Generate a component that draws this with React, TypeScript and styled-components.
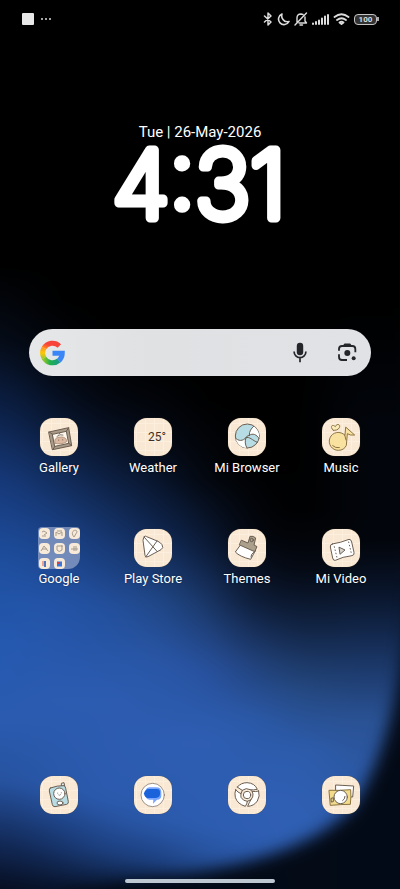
import React from "react";
import styled, { createGlobalStyle } from "styled-components";

const GlobalStyle = createGlobalStyle`
  * { box-sizing: border-box; }
  body { margin: 0; background: #000; font-family: Roboto, "Noto Sans", sans-serif; color: #fff; }
  button { border: 0; padding: 0; background: none; color: inherit; font: inherit; cursor: pointer; }
`;

const Screen = styled.main`
  position: relative;
  isolation: isolate;
  display: flex;
  flex-direction: column;
  min-height: 100vh;
  overflow: hidden;
`;

const WallpaperArt = styled.svg`
  position: absolute;
  inset: 0;
  z-index: -1;
  width: 100%;
  height: 100%;
`;

const StatusBar = styled.header`
  display: flex;
  align-items: center;
  justify-content: space-between;
  height: 38px;
  padding: 0 21px 0 22px;
  color: #dcdcdc;
`;

const StatusGroup = styled.div<{ $gap: number }>`
  display: flex;
  align-items: center;
  gap: ${(p) => p.$gap}px;
`;

const Notice = styled.span`
  width: 12px;
  height: 12px;
  border-radius: 1px;
  background: #e8e8e8;
`;

const StatusIcon = styled.svg`
  display: block;
  height: 14px;
  fill: none;
  stroke: currentColor;
  stroke-linecap: round;
  stroke-linejoin: round;
`;

const Battery = styled.span`
  display: flex;
  align-items: center;
  &::after {
    content: "";
    width: 2px;
    height: 4px;
    background: #aaa;
  }
`;

const BatteryBody = styled.span`
  width: 23px;
  height: 11px;
  border: 1px solid #c4c4c4;
  border-radius: 4px;
  background: #333;
  font-size: 8px;
  font-weight: 700;
  line-height: 10px;
  text-align: center;
`;

const ClockWidget = styled.section`
  display: flex;
  flex-direction: column;
  align-items: center;
  padding-top: 84px;
  height: 291px;
`;

const DateLine = styled.div`
  font-size: 15px;
  line-height: 20px;
`;

const ClockFace = styled.svg`
  width: 200px;
  height: 88px;
  overflow: visible;
  text {
    font-family: Inter, Roboto, sans-serif;
    font-size: 93px;
    font-weight: 200;
    fill: #fff;
    stroke: #fff;
    stroke-width: 9px;
    stroke-linejoin: round;
    text-anchor: middle;
  }
`;

const SearchBar = styled.form`
  display: flex;
  align-items: center;
  height: 47px;
  margin: 0 29px;
  padding: 0 12px 0 11px;
  border-radius: 24px;
  background: linear-gradient(90deg, #e6e7e8, #dfe1e3 35%, #e1e2e5);
`;

const SearchInput = styled.input`
  flex: 1;
  min-width: 0;
  height: 100%;
  padding: 0 12px;
  border: 0;
  outline: 0;
  background: none;
  font: 16px Roboto, sans-serif;
  color: #202124;
`;

const SearchAction = styled.button`
  display: flex;
  align-items: center;
  justify-content: center;
  width: 24px;
  height: 24px;
  & + & { margin-left: 23px; }
`;

const Glyph = styled.svg<{ $w: number; $h: number }>`
  display: block;
  width: ${(p) => p.$w}px;
  height: ${(p) => p.$h}px;
  fill: none;
`;

const AppGrid = styled.section`
  display: grid;
  grid-template-columns: repeat(4, 1fr);
  row-gap: 53px;
  padding: 42px 12px 0;
`;

const Dock = styled.nav`
  display: grid;
  grid-template-columns: repeat(4, 1fr);
  margin-top: auto;
  padding: 0 12px;
`;

const AppButton = styled.button`
  display: flex;
  flex-direction: column;
  align-items: center;
`;

const Tile = styled.span`
  display: block;
  width: 38px;
  height: 38px;
  border-radius: 13px;
  overflow: hidden;
  background-color: #f9e8d3;
  background-image: linear-gradient(#fcefdd 1px, transparent 1px),
    linear-gradient(90deg, #fcefdd 1px, transparent 1px);
  background-size: 9px 9px;
  background-position: 2px 5px;
  box-shadow: 0 0 1px #5a4a38;
`;

const TileArt = styled.svg`
  display: block;
  width: 38px;
  height: 38px;
  fill: none;
  stroke: #6b5e52;
  stroke-width: 3px;
  stroke-linecap: round;
  stroke-linejoin: round;
`;

const Temperature = styled.span`
  display: block;
  padding-right: 6px;
  color: #3c3027;
  font-size: 12px;
  line-height: 38px;
  text-align: right;
`;

const Label = styled.span`
  padding-top: 3px;
  font-size: 13px;
  line-height: 17px;
  white-space: nowrap;
  text-shadow: 0 0 2px rgba(0, 0, 0, 0.4);
`;

const Folder = styled.span`
  display: grid;
  grid-template-columns: repeat(3, 11px);
  grid-auto-rows: 11px;
  gap: 4px;
  align-content: start;
  width: 42px;
  height: 42px;
  margin: -2px 0;
  padding-top: 1px;
  padding-left: 1px;
  border-radius: 4px 4px 12px 4px;
  background: rgba(156, 172, 208, 0.68);
`;

const MiniTile = styled.svg`
  display: block;
  width: 11px;
  height: 11px;
  border-radius: 4px;
  background: #f8ead9;
  fill: none;
  stroke: #a59b90;
  stroke-width: 1px;
`;

const HomeIndicator = styled.div`
  width: 150px;
  height: 4px;
  margin: 65px auto 6px;
  border-radius: 2px;
  background: #bdc8d3;
`;

type Stop = [number, string];
const bands: { x: number; w: number; stops: Stop[] }[] = [
  { x: -80, w: 110, stops: [[265, "#000"], [340, "#050c18"], [400, "#0b1e42"], [480, "#16397a"], [560, "#1e4e9e"], [640, "#2459b0"], [720, "#2a5bb0"], [780, "#26529f"], [840, "#122a58"], [889, "#060d20"]] },
  { x: 30, w: 50, stops: [[300, "#000"], [370, "#030811"], [430, "#0a1a38"], [520, "#183d7e"], [600, "#2353a6"], [700, "#2b5cb1"], [790, "#2957a8"], [845, "#16336a"], [889, "#08132a"]] },
  { x: 80, w: 50, stops: [[340, "#000"], [400, "#03070f"], [460, "#0a1935"], [540, "#173873"], [610, "#23509f"], [700, "#2c5cb1"], [800, "#2b5aae"], [850, "#1c4080"], [889, "#0a1833"]] },
  { x: 130, w: 50, stops: [[370, "#000"], [450, "#050c1a"], [530, "#0f2650"], [600, "#204888"], [660, "#2956a6"], [740, "#2d5db2"], [820, "#2b5aac"], [860, "#1c4080"], [889, "#0a1833"]] },
  { x: 180, w: 50, stops: [[400, "#000"], [480, "#03070e"], [550, "#0d1e3e"], [610, "#1c3b70"], [670, "#2852a0"], [740, "#2e5eb3"], [830, "#2c5cb0"], [875, "#22498c"]] },
  { x: 230, w: 50, stops: [[460, "#000"], [540, "#02050b"], [600, "#0c1a34"], [660, "#203f76"], [720, "#2b59a8"], [800, "#2f5fb4"], [889, "#2b59aa"]] },
  { x: 280, w: 50, stops: [[510, "#000"], [570, "#040811"], [630, "#112444"], [690, "#24487f"], [750, "#2d5cad"], [830, "#3060b4"]] },
  { x: 330, w: 150, stops: [[300, "#000"], [420, "#02050b"], [540, "#02050b"], [600, "#0b1830"], [660, "#1a3564"], [720, "#2a5294"], [800, "#2d5cac"]] },
];

const Wallpaper = () => (
  <WallpaperArt viewBox="0 0 400 889" preserveAspectRatio="none" aria-hidden="true">
    <defs>
      <filter id="mix" x="-20%" y="-5%" width="140%" height="110%" colorInterpolationFilters="sRGB"><feGaussianBlur stdDeviation="24 5" /></filter>
      <filter id="edge" x="-30%" y="-30%" width="160%" height="160%" colorInterpolationFilters="sRGB"><feGaussianBlur stdDeviation="8" /></filter>
      {bands.map((b, i) => (
        <linearGradient key={i} id={`band${i}`} gradientUnits="userSpaceOnUse" x1="0" y1="0" x2="0" y2="889">
          {b.stops.map(([y, c]) => <stop key={y} offset={y / 889} stopColor={c} />)}
        </linearGradient>
      ))}
    </defs>
    <g filter="url(#mix)">
      {bands.map((b, i) => <rect key={i} x={b.x} y="-40" width={b.w + 1} height="980" fill={`url(#band${i})`} />)}
    </g>
    <path filter="url(#edge)" fill="#020711" fillOpacity=".96" d="M412 590 C402 690 384 765 350 810 C310 849 245 866 150 880 L60 894 V940 H480 V590 Z" />
  </WallpaperArt>
);

const GoogleLogo = () => (
  <Glyph $w={25} $h={26} viewBox="0 0 74 78" aria-hidden="true">
    <defs>
      <linearGradient id="gRed" x1="1" y1="0" x2="0" y2="1"><stop offset=".5" stopColor="#f8433b" /><stop offset="1" stopColor="#ff8a1c" /></linearGradient>
      <linearGradient id="gYellow" x1="0" y1="0" x2="0" y2="1"><stop stopColor="#ff9d16" /><stop offset=".5" stopColor="#fcc80a" /><stop offset="1" stopColor="#a9c820" /></linearGradient>
      <linearGradient id="gGreen" x1="0" y1="0" x2="1" y2="0"><stop stopColor="#8cc52c" /><stop offset=".4" stopColor="#20b14c" /><stop offset="1" stopColor="#189c86" /></linearGradient>
    </defs>
    <g strokeWidth="15">
      <path stroke="url(#gGreen)" d="M11.5 53.8A29.5 29.5 0 0 0 56 61.6" />
      <path stroke="url(#gYellow)" d="M11.5 24.2A29.5 29.5 0 0 0 11.5 53.8" />
      <path stroke="url(#gRed)" d="M57.5 17.8A29.5 29.5 0 0 0 11.5 24.2" />
      <path stroke="#3b86f7" d="M56 61.6A29.5 29.5 0 0 0 66.3 39.5H37" />
    </g>
  </Glyph>
);

const MicIcon = () => (
  <Glyph $w={14} $h={21} viewBox="0 0 41 62" aria-hidden="true">
    <rect x="11" y="2" width="19" height="37" rx="9.5" fill="#24262a" />
    <path d="M3 28a17.5 18 0 0 0 35 0M20.5 46V60" stroke="#24262a" strokeWidth="5" />
  </Glyph>
);

const LensIcon = () => (
  <Glyph $w={19} $h={19} viewBox="0 0 57 57" aria-hidden="true">
    <g stroke="#24262a" strokeWidth="5.5">
      <path d="M3 23V18Q3 9 12 9H43Q52 9 52 18V28M3 34V42Q3 51 12 51H27" />
      <path d="M18 8 21 4H35L38 8" />
    </g>
    <circle cx="28" cy="30" r="9" fill="#24262a" />
    <circle cx="47" cy="46" r="6" fill="#24262a" />
  </Glyph>
);

const art: Record<string, React.ReactNode> = {
  Gallery: (
    <>
      <path fill="#a99b87" d="M27 42 86 29 95 83 38 95Z" />
      <path fill="#fff8ee" d="M38 49 79 40 86 76 45 85Z" />
      <path d="M27 42 38 49M86 29 79 40M95 83 86 76M38 95 45 85" />
      <path fill="#dcb9a0" stroke="#9d8069" strokeWidth="2" d="M45 76C41 62 50 58 61 57C73 56 82 62 79 72C70 78 56 79 45 76Z" />
      <path strokeWidth="2.5" d="M51 55Q60 47 69 51M57 48 61 44M56 66V67M68 65V66" />
    </>
  ),
  "Mi Browser": (
    <>
      <circle cx="58" cy="54" r="36" fill="#b7dce3" />
      <path fill="#fff" stroke="none" d="M64 52C63 40 70 31 77 25C91 36 96 50 93 61C86 50 74 44 64 52Z" />
      <path fill="#fff" stroke="none" d="M54 59C50 69 51 81 57 90C37 89 26 75 22 60C31 70 45 70 54 59Z" />
      <path d="M64 52C74 44 86 50 93 61M64 52C63 40 70 31 77 25M54 59C45 70 31 70 22 60M54 59C50 69 51 81 57 90M54 59C64 54 74 68 88 73M54 59Q56 52 64 52" />
    </>
  ),
  Music: (
    <g stroke="#8d7445">
      <path fill="#f9e2a0" d="M72 28 98 51Q84 53 76 47L73 82Q66 97 49 97A27 27 0 1 1 68 51Z" />
      <path d="M68 51 72 66M32 83Q40 91 52 89" />
      <path fill="#fbedb9" d="M34 37C22 26 31 17 40 26C44 15 57 19 52 29C49 36 40 37 34 37Z" />
    </g>
  ),
  "Play Store": (
    <>
      <path fill="#fff" d="M32 22Q28 23 27 34L33 79Q34 87 42 83L81 62Q90 57 84 47Q81 42 72 37L38 23Q34 20 32 22Z" />
      <path d="M30 24 70 68M35 84 69 36" />
    </>
  ),
  Themes: (
    <>
      <path fill="#fff" d="M38 47 22 69Q35 83 68 91L82 65Z" />
      <path fill="#aaa08c" d="M41 34 60 42 66 22Q77 20 83 27L78 48 87 53 80 68 35 48Z" />
      <circle cx="71" cy="33" r="5" />
      <path d="M69 84 71 76 82 66" />
    </>
  ),
  "Mi Video": (
    <>
      <path fill="#fff" d="M31 45Q57 41 81 31Q87 30 89 39L96 70Q98 78 90 80Q62 83 40 94Q34 96 32 87L25 54Q24 46 31 45Z" />
      <path fill="#d8d4cf" d="M52 55 69 63 55 75Z" />
      <path strokeDasharray="2 8" d="M37 53 45 86M80 39 88 73" />
    </>
  ),
  Phone: (
    <>
      <path fill="#e5efee" d="M64 29V22L72 20 74 30Z" />
      <path fill="#b8dce3" d="M31 36Q53 28 72 29Q76 30 77 37L85 77Q86 83 80 85L45 92Q38 92 37 86L28 45Q27 38 31 36Z" />
      <circle cx="58" cy="53" r="17" fill="#fff" />
      <ellipse cx="60" cy="81" rx="9" ry="6" fill="#fff" />
      <path strokeWidth="2" d="M53 51V52M64 50V51M56 57Q59 60 62 56" />
    </>
  ),
  Messages: (
    <>
      <circle cx="56" cy="57" r="35" fill="#fff" strokeWidth="2" />
      <path stroke="none" fill="#79a5ff" d="M46 34H67Q82 34 82 48V59Q82 70 69 71L57 83 58 71H46Q35 70 35 58V48Q35 35 46 34Z" />
      <path stroke="none" fill="#1a63db" d="M46 39H69Q78 39 78 49V54Q78 65 66 66H41Q31 65 30 52Q33 39 46 39Z" />
    </>
  ),
  Chrome: (
    <>
      <path fill="#fff" d="M28 33Q39 20 57 20Q80 21 88 40Q74 43 67 41Q54 34 43 43Q37 40 28 33Z" />
      <path fill="#fff" d="M23 41Q19 52 22 64Q28 84 52 91Q57 84 58 76Q45 75 39 64Q38 57 39 53Q30 50 23 41Z" />
      <path fill="#fff" d="M92 45Q97 60 88 75Q78 90 59 91Q63 80 69 71Q76 63 75 54L72 46Q83 48 92 45Z" />
      <circle cx="57" cy="57" r="11" fill="#fff" />
      <path d="M43 43 39 53M67 41 72 46M69 71 58 76" />
    </>
  ),
  Camera: (
    <>
      <path fill="#fff" d="M42 27 95 30 92 63 42 60Z" />
      <path fill="#f2dc8b" stroke="#8a733c" d="M22 43Q53 44 86 41Q88 62 85 85Q57 85 26 88Z" />
      <circle cx="56" cy="63" r="20" fill="#fff" />
      <path d="M28 67 34 65V77L29 78ZM62 74Q69 70 69 61" />
    </>
  ),
};

const miniArt = [
  <path d="M3 4 5 3 8 5 5 7M3 8H7" />,
  <path d="M2 8V4L5 6 8 4V8M3 3H8" />,
  <path d="M5 9C0 3 8 0 8 4L5 9" />,
  <path d="M2 8 5 3 9 8M3 6H8" />,
  <path d="M3 3H8V7Q5 10 3 7ZM8 2V4" />,
  <path d="M2 6H9M5 3V8M7 3V8" />,
  <><path stroke="#5075bd" strokeWidth="2" d="M6 3V9" /><path stroke="#dd5b4d" d="M4 3V8" /></>,
  <><path stroke="#3877dc" strokeWidth="5" d="M3 6H8" /><path stroke="#d93f42" strokeWidth="2" d="M3 5H6" /></>,
];

const TileFor = ({ name }: { name: string }) => {
  if (name === "Google")
    return <Folder>{miniArt.map((m, i) => <MiniTile key={i} viewBox="0 0 11 11">{m}</MiniTile>)}</Folder>;
  if (name === "Weather") return <Tile><Temperature>25°</Temperature></Tile>;
  return <Tile><TileArt viewBox="0 0 114 114">{art[name]}</TileArt></Tile>;
};

const apps = ["Gallery", "Weather", "Mi Browser", "Music", "Google", "Play Store", "Themes", "Mi Video"];
const dockApps = ["Phone", "Messages", "Chrome", "Camera"];

export default function App() {
  return (
    <>
      <GlobalStyle />
      <Screen>
        <Wallpaper />
        <StatusBar>
          <StatusGroup $gap={7}>
            <Notice />
            <StatusIcon width="11" viewBox="0 0 11 14" strokeWidth="2"><path d="M1 7h0M5 7h0M9 7h0" /></StatusIcon>
          </StatusGroup>
          <StatusGroup $gap={4}>
            <StatusIcon width="10" viewBox="0 0 10 14" strokeWidth="1.5"><path d="M1.5 4 8 10 5 13V1L8 4 1.5 10" /></StatusIcon>
            <StatusIcon width="13" viewBox="0 0 13 14" strokeWidth="1.6"><path d="M5 2A5.5 5.5 0 1 0 12 9.5Q8 10.5 6 7.5Q4 5 5 2Z" /></StatusIcon>
            <StatusIcon width="14" viewBox="0 0 14 14" strokeWidth="1.4"><path d="M12.5 1 1 13M3 10V6Q3 2 7 2L9 2.5M11 5V9L12.5 11H5M6 13H8.5" /></StatusIcon>
            <StatusIcon width="17" viewBox="0 0 17 14" strokeWidth="2" strokeLinecap="butt"><path d="M1 11.5V12M4 10V12M7 8.5V12M10 6.5V12M13 4.5V12M16 3V12" /></StatusIcon>
            <StatusIcon width="17" viewBox="0 0 17 14" strokeWidth="1.8"><path d="M1.5 5Q8.5-.5 15.5 5M4 8Q8.5 4.5 13 8M6.5 10.5Q8.5 9 10.5 10.5L8.5 12Z" /></StatusIcon>
            <Battery><BatteryBody>100</BatteryBody></Battery>
          </StatusGroup>
        </StatusBar>
        <ClockWidget>
          <DateLine>Tue | 26-May-2026</DateLine>
          <ClockFace viewBox="0 0 200 88"><text x="99" y="76">4:31</text></ClockFace>
        </ClockWidget>
        <SearchBar role="search" onSubmit={(e) => e.preventDefault()}>
          <GoogleLogo />
          <SearchInput type="text" aria-label="Search" />
          <SearchAction type="button" aria-label="Voice search"><MicIcon /></SearchAction>
          <SearchAction type="button" aria-label="Lens"><LensIcon /></SearchAction>
        </SearchBar>
        <AppGrid>
          {apps.map((name) => (
            <AppButton key={name} type="button"><TileFor name={name} /><Label>{name}</Label></AppButton>
          ))}
        </AppGrid>
        <Dock>
          {dockApps.map((name) => (
            <AppButton key={name} type="button" aria-label={name}><TileFor name={name} /></AppButton>
          ))}
        </Dock>
        <HomeIndicator />
      </Screen>
    </>
  );
}
